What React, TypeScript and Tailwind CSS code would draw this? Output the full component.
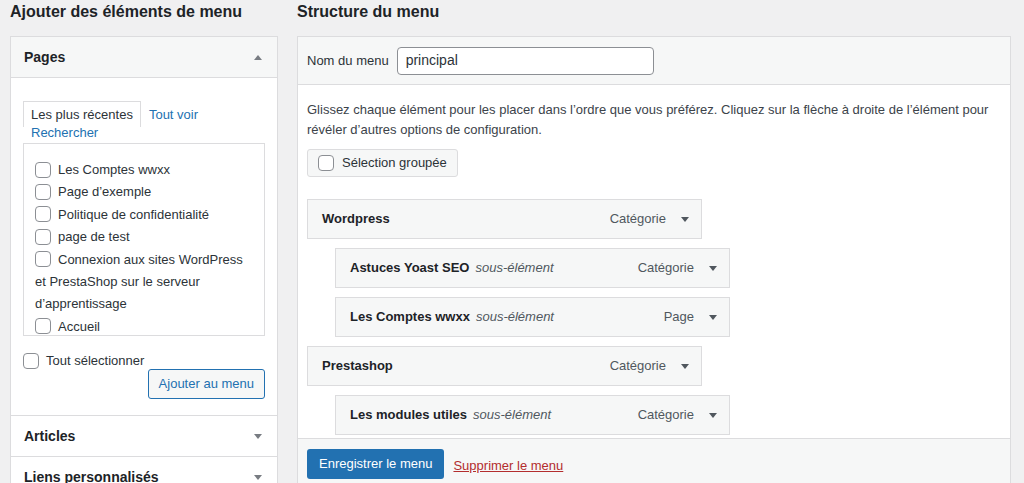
import React from 'react';

const font = { fontFamily: '"Liberation Sans", Arial, sans-serif' };

const Arrow = ({ up = false, className = '' }: { up?: boolean; className?: string }) => (
  <svg width="8" height="5" viewBox="0 0 8 5" className={className}>
    <path d={up ? 'M0 5h8L4 0z' : 'M0 0h8L4 5z'} fill="currentColor" />
  </svg>
);

const Box = ({ className = '' }: { className?: string }) => (
  <span
    className={`inline-block w-4 h-4 rounded-[4px] border border-[#8c8f94] bg-white align-middle shrink-0 ${className}`}
  />
);

const pages = [
  'Les Comptes wwxx',
  'Page d’exemple',
  'Politique de confidentialité',
  'page de test',
  'Connexion aux sites WordPress et PrestaShop sur le serveur d’apprentissage',
  'Accueil',
];

interface ItemProps {
  title: string;
  type: string;
  sub?: boolean;
}

const MenuItem: React.FC<ItemProps> = ({ title, type, sub }) => (
  <div
    className={`h-[40px] w-[395px] flex items-center border border-[#dcdcde] bg-[#f6f7f7] pl-[14px] pr-[12px] ${
      sub ? 'ml-[28px]' : ''
    }`}
  >
    <span className="font-bold text-[#1d2327]">{title}</span>
    {sub && <span className="italic text-[#50575e] ml-[6px]">sous-élément</span>}
    <span className="ml-auto text-[#50575e]">{type}</span>
    <Arrow className="ml-[15px] text-[#50575e]" />
  </div>
);

export default function App() {
  return (
    <div
      className="w-[1024px] h-[483px] overflow-hidden bg-[#f0f0f1] text-[13px] text-[#2c3338] flex pl-[10px] gap-[19px]"
      style={font}
    >
      {/* Ajouter des éléments */}
      <div className="w-[268px] shrink-0">
        <h2 className="h-[24px] leading-[24px] text-[16px] font-bold text-[#1d2327]">
          Ajouter des éléments de menu
        </h2>
        <div className="mt-[12px] border border-[#dcdcde] bg-white">
          <div className="h-[41px] flex items-center justify-between px-[13px] bg-[#f6f7f7] border-b border-[#dcdcde]">
            <span className="text-[14px] font-bold text-[#1d2327]">Pages</span>
            <Arrow up className="text-[#787c82] mr-[2px]" />
          </div>
          <div className="px-[12px] pt-[28px] pb-[16px]">
            <div className="leading-[18px]">
              <span className="border-x border-t border-[#dcdcde] px-[7px] py-[5px] text-[#2c3338]">
                Les plus récentes
              </span>
              <wbr />
              <span className="px-2 text-[#2271b1]">Tout voir</span>
              <wbr />
              <span className="px-2 text-[#2271b1]">Rechercher</span>
            </div>
            <div className="mt-[1px] h-[193px] overflow-hidden border border-[#dcdcde] pl-[11px] pr-[8px] pt-[15px] leading-[22.4px]">
              {pages.map((p) => (
                <div key={p}>
                  <Box className="mr-[7px] -mt-[2px]" />
                  {p}
                </div>
              ))}
            </div>
            <div className="mt-[15px] h-[20px] flex items-center">
              <Box className="mr-[7px]" />
              <span>Tout sélectionner</span>
            </div>
            <div className="flex justify-end -mt-[2px]">
              <button className="h-[30px] px-[10px] rounded-[3px] border border-[#2271b1] bg-[#f6f7f7] text-[#2271b1]">
                Ajouter au menu
              </button>
            </div>
          </div>
          <div className="h-[41px] flex items-center justify-between px-[13px] border-t border-[#dcdcde]">
            <span className="text-[14px] font-bold text-[#1d2327]">Articles</span>
            <Arrow className="text-[#787c82] mr-[2px]" />
          </div>
          <div className="h-[41px] flex items-center justify-between px-[13px] border-t border-[#dcdcde]">
            <span className="text-[14px] font-bold text-[#1d2327]">Liens personnalisés</span>
            <Arrow className="text-[#787c82] mr-[2px]" />
          </div>
        </div>
      </div>

      {/* Structure du menu */}
      <div className="w-[714px] shrink-0">
        <h2 className="h-[24px] leading-[24px] text-[16px] font-bold text-[#1d2327]">
          Structure du menu
        </h2>
        <div className="mt-[12px] border border-[#dcdcde] bg-white">
          <div className="h-[48px] flex items-center px-[9px] bg-[#f6f7f7] border-b border-[#dcdcde]">
            <span>Nom du menu</span>
            <div className="ml-[8px] w-[257px] h-[28px] flex items-center px-[8px] rounded-[4px] border border-[#8c8f94] bg-white text-[14px] text-[#2c3338]">
              principal
            </div>
          </div>
          <div className="px-[9px] pt-[15px] pb-[3px]">
            <p className="leading-[20px] text-[#3c434a]">
              Glissez chaque élément pour les placer dans l’ordre que vous préférez. Cliquez sur la flèche à droite de
              l’élément pour révéler d’autres options de configuration.
            </p>
            <div className="mt-[9px] inline-flex items-center h-[28px] px-[10px] rounded-[3px] border border-[#dcdcde] bg-[#f6f7f7]">
              <Box className="mr-[8px]" />
              <span>Sélection groupée</span>
            </div>
            <div className="mt-[22px] flex flex-col gap-[9px]">
              <MenuItem title="Wordpress" type="Catégorie" />
              <MenuItem title="Astuces Yoast SEO" type="Catégorie" sub />
              <MenuItem title="Les Comptes wwxx" type="Page" sub />
              <MenuItem title="Prestashop" type="Catégorie" />
              <MenuItem title="Les modules utiles" type="Catégorie" sub />
            </div>
          </div>
          <div className="h-[60px] flex items-start pt-[10px] px-[9px] bg-[#f6f7f7] border-t border-[#dcdcde]">
            <button className="h-[30px] px-[12px] rounded-[3px] bg-[#2271b1] text-white">
              Enregistrer le menu
            </button>
            <span className="ml-[9px] mt-[7px] text-[#b32d2e] underline">Supprimer le menu</span>
          </div>
        </div>
      </div>
    </div>
  );
}
